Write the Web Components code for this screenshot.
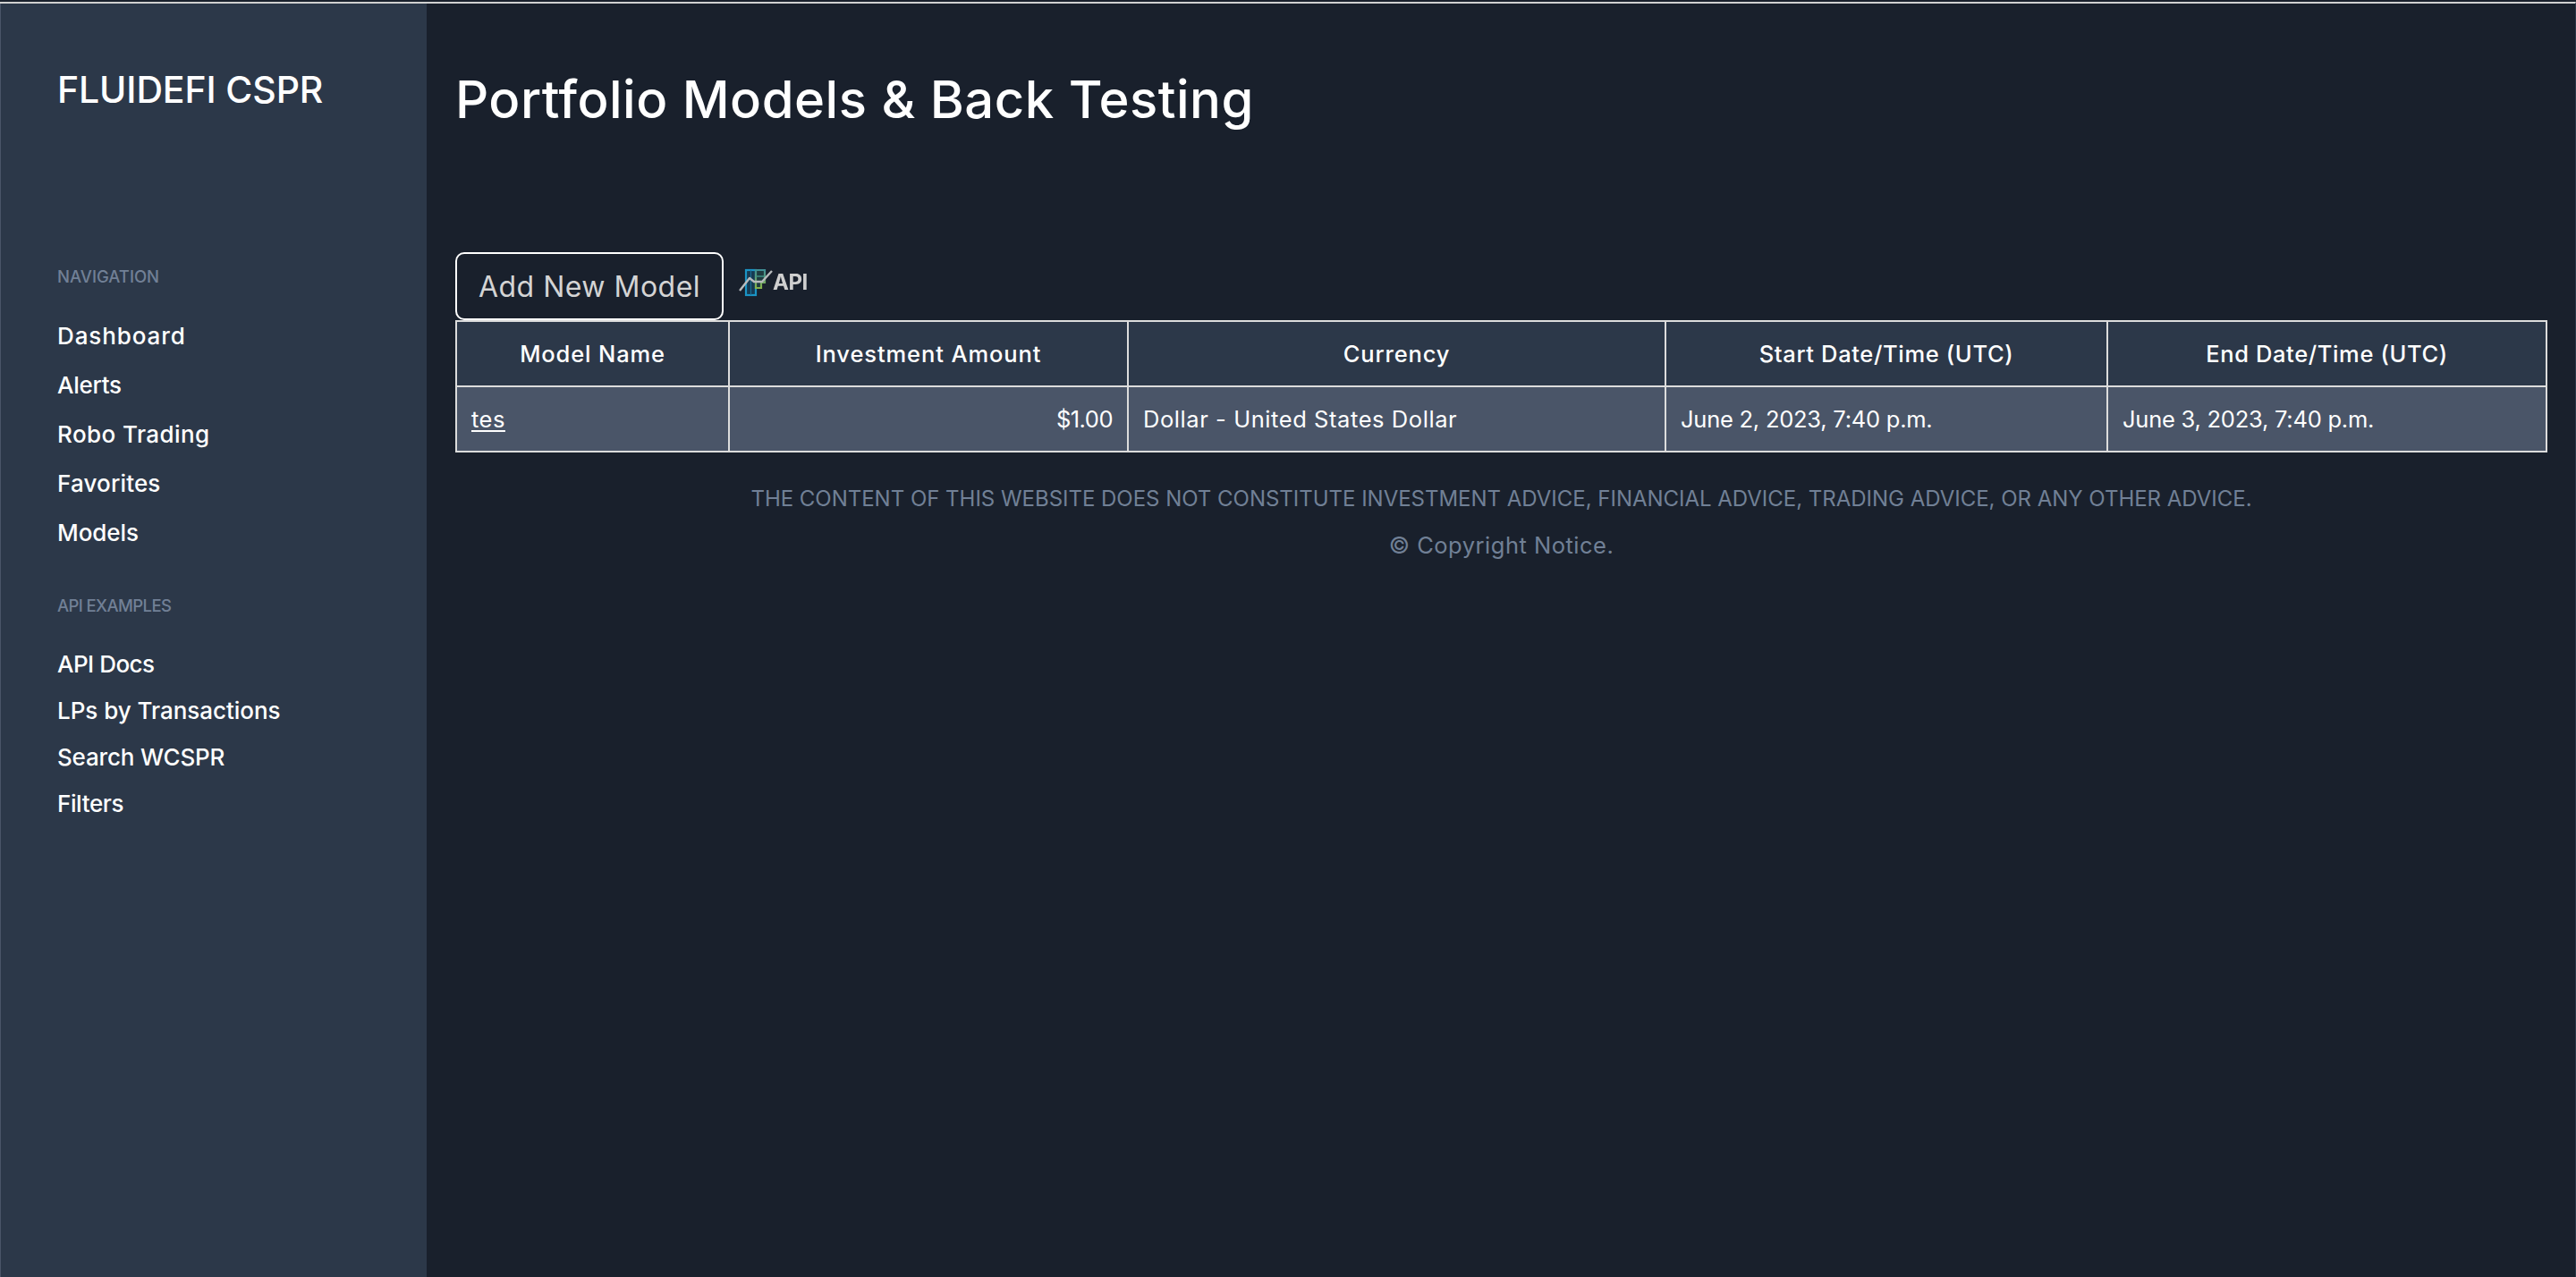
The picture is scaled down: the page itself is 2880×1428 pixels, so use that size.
<!DOCTYPE html>
<html><head><meta charset="utf-8"><style>
html,body{margin:0;height:100%;background:#19202c}
body{font-family:Inter,"Liberation Sans",sans-serif;overflow:hidden}
</style></head><body>
<template id="app-t"><style>
:host{display:block;box-sizing:border-box;height:1428px;background:#19202c;color:#fff}
.inner{display:flex;height:100%;box-sizing:border-box;border-top:2px solid #d0d0d0;margin-top:2px;border-right:1px solid #2c3849}
main{flex:1;min-width:0;padding:0 31px 0 32px}
</style><div class="inner"><slot name="side"></slot><main><slot></slot></main></div></template>

<template id="side-t"><style>
:host{display:block;box-sizing:border-box;width:477px;flex:none;background:#2c3849;border-left:1px solid #4a5568;padding:0 0 0 63px}
.brand{font-size:41px;line-height:60px;margin-top:66px;font-weight:450;letter-spacing:-.12px;white-space:nowrap}
</style><div class="brand">FLUIDEFI CSPR</div><slot></slot></template>

<template id="group-t"><style>
:host{display:block;margin-top:var(--top)}
h2{margin:0;font:500 18.500px/24px Inter,"Liberation Sans",sans-serif;color:#718096;white-space:nowrap}
.items{display:flex;flex-direction:column;margin-top:var(--gap)}
::slotted(*){line-height:var(--row)}
</style><h2><slot name="label"></slot></h2><div class="items"><slot></slot></div></template>

<template id="link-t"><style>
:host{display:block;font-size:26px;font-weight:450;color:#fff;white-space:nowrap}
</style><slot></slot></template>

<template id="title-t"><style>
:host{display:block;font-size:58px;line-height:90px;font-weight:450;margin-top:62px;letter-spacing:.5px;white-space:nowrap}
</style><slot></slot></template>

<template id="bar-t"><style>
:host{display:flex;align-items:flex-start;margin-top:124px;height:78px}
button{box-sizing:border-box;width:300px;height:76px;background:transparent;border:2px solid #fff;border-radius:10px;color:#d4d4d4;font:400 32px Inter,"Liberation Sans",sans-serif;letter-spacing:.5px;padding:0;white-space:nowrap;margin-top:2px}
.api{display:flex;align-items:center;margin-left:17px;margin-top:19px;height:34px;color:#cfcfcf;font:700 24px/34px Inter,"Liberation Sans",sans-serif;letter-spacing:-.5px;filter:blur(.4px)}
svg{display:block;width:38px;height:32px;flex:none}
</style><button><slot></slot></button><div class="api"><svg viewBox="0 0 38 32" fill="none">
<defs><linearGradient id="g" x1="0" y1="0" x2="0" y2="1"><stop offset="0" stop-color="#3f8f96"/><stop offset="1" stop-color="#86b24a"/></linearGradient></defs>
<rect x="8" y="2" width="11" height="28" fill="#173a52" stroke="#1a93c4" stroke-width="2.200"/>
<path d="M13.500 2v28" stroke="#1c6f95" stroke-width="1"/>
<path d="M19 2h10v14h-4v6h-6z" fill="#1f3b3f" stroke="url(#g)" stroke-width="2.200"/>
<path d="M19 9h10" stroke="#3f8f86" stroke-width="1.500"/>
<path d="M1 25 L12 11 L17 15 L26 15 L37 3" stroke="#b8bbbd" stroke-width="2.400" stroke-linejoin="round"/>
</svg><span>API</span></div></template>

<template id="table-t"><style>
:host{display:grid;box-sizing:border-box;grid-template-columns:303px 444px 599px 492px 489px;width:2339px;background:#dcdcdc;gap:2px;padding:2px}
::slotted(*){display:flex;align-items:center;height:71px;padding:0 16px;box-sizing:border-box;white-space:nowrap;min-width:0}
</style><slot></slot></template>

<template id="th-t"><style>
:host{background:#2c3849;justify-content:center;font-weight:450;font-size:25.500px;color:#fff}
</style><slot></slot></template>
<template id="td-t"><style>
:host{background:#4a5568;color:#fff;font-size:25.500px;font-weight:400}
:host([end]){justify-content:flex-end}
</style><slot></slot></template>

<template id="foot-t"><style>
:host{display:block;text-align:center;color:#718096;line-height:52px;margin-top:26px;white-space:nowrap}
.a{font-size:24px;letter-spacing:-.02px}
.b{font-size:25.500px;letter-spacing:.5px}
</style><div class="a"><slot name="a"></slot></div><div class="b"><slot name="b"></slot></div></template>

<script>
function def(name,tid){
  customElements.define(name,class extends HTMLElement{
    constructor(){super();const r=this.attachShadow({mode:'open'});r.appendChild(document.getElementById(tid).content.cloneNode(true));}
  });
}
def('fd-app','app-t');def('fd-side','side-t');def('fd-group','group-t');def('fd-link','link-t');def('fd-title','title-t');def('fd-bar','bar-t');def('fd-table','table-t');def('fd-th','th-t');def('fd-td','td-t');def('fd-foot','foot-t');
</script>

<fd-app>
<fd-side slot="side">
<fd-group style="--top:152px;--gap:11px;--row:55px">
<span slot="label">NAVIGATION</span>
<fd-link style="letter-spacing:.9px">Dashboard</fd-link><fd-link style="letter-spacing:-.27px">Alerts</fd-link><fd-link style="letter-spacing:.42px">Robo Trading</fd-link><fd-link style="letter-spacing:.16px">Favorites</fd-link><fd-link style="letter-spacing:-.08px">Models</fd-link>
</fd-group>
<fd-group style="--top:28px;--gap:14px;--row:52px">
<span slot="label" style="letter-spacing:-.6px">API EXAMPLES</span>
<fd-link style="letter-spacing:-.5px">API Docs</fd-link><fd-link style="letter-spacing:-.03px">LPs by Transactions</fd-link><fd-link style="letter-spacing:-.19px">Search WCSPR</fd-link><fd-link style="letter-spacing:-.38px">Filters</fd-link>
</fd-group>
</fd-side>
<fd-title>Portfolio Models &amp; Back Testing</fd-title>
<fd-bar>Add New Model</fd-bar>
<fd-table>
<fd-th style="letter-spacing:.87px">Model Name</fd-th><fd-th style="letter-spacing:.9px">Investment Amount</fd-th><fd-th style="letter-spacing:.84px">Currency</fd-th><fd-th style="letter-spacing:.65px">Start Date/Time (UTC)</fd-th><fd-th style="letter-spacing:.62px">End Date/Time (UTC)</fd-th>
<fd-td style="letter-spacing:.5px"><a style="color:inherit;text-decoration:underline;text-underline-offset:3px">tes</a></fd-td><fd-td end style="letter-spacing:-.5px">$1.00</fd-td><fd-td style="letter-spacing:.57px">Dollar - United States Dollar</fd-td><fd-td style="letter-spacing:-.24px">June 2, 2023, 7:40 p.m.</fd-td><fd-td style="letter-spacing:-.24px">June 3, 2023, 7:40 p.m.</fd-td>
</fd-table>
<fd-foot><span slot="a">THE CONTENT OF THIS WEBSITE DOES NOT CONSTITUTE INVESTMENT ADVICE, FINANCIAL ADVICE, TRADING ADVICE, OR ANY OTHER ADVICE.</span><span slot="b">© Copyright Notice.</span></fd-foot>
</fd-app>
</body></html>
